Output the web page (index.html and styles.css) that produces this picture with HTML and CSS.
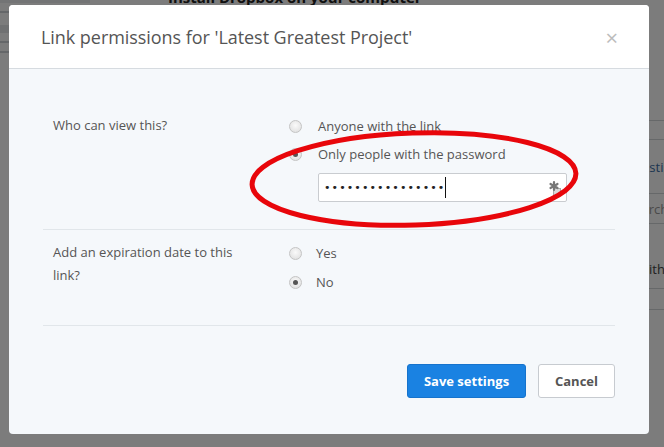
FILE: index.html
```html
<!DOCTYPE html>
<html>
<head>
<meta charset="utf-8">
<link rel="stylesheet" href="styles.css">
</head>
<body>
<div class="page">
  <div class="page-side">
    <div class="side-line light"></div>
    <div class="side-line"></div>
    <div class="side-band"></div>
    <div class="side-line"></div>
    <div class="side-line"></div>
  </div>
  <div class="page-main">
    <h2 class="page-title">Install Dropbox on your computer</h2>
    <div class="page-list">
      <div class="list-row r1"></div>
      <div class="list-row r2 link">Existing</div>
      <div class="list-row r3 muted">Search</div>
      <div class="list-row r4">With</div>
      <div class="list-row r5"></div>
    </div>
  </div>
</div>
<div class="backdrop"></div>

<div class="modal">
  <div class="modal-header">
    <h1 class="modal-title">Link permissions for 'Latest Greatest Project'</h1>
    <span class="modal-close">×</span>
  </div>
  <div class="modal-body">
    <div class="row row-first">
      <div class="row-label">Who can view this?</div>
      <div class="row-options">
        <div class="opt"><span class="radio"></span><span>Anyone with the link</span></div>
        <div class="opt"><span class="radio checked"></span><span>Only people with the password</span></div>
        <div class="pw">
          <span class="pw-dots">••••••••••••••••</span><span class="caret"></span>
          <svg class="pw-icon" width="14" height="18" viewBox="0 0 14 18">
            <rect x="5.5" y="9.5" width="7" height="7" fill="#d9d9d9" stroke="#aaa"/>
            <g stroke="#777" stroke-width="2.2" stroke-linecap="round">
              <line x1="6" y1="3" x2="6" y2="11"/>
              <line x1="2.5" y1="5" x2="9.5" y2="9"/>
              <line x1="2.5" y1="9" x2="9.5" y2="5"/>
            </g>
          </svg>
        </div>
      </div>
    </div>
    <div class="row row-second">
      <div class="row-label">Add an expiration date to this link?</div>
      <div class="row-options">
        <div class="opt"><span class="radio"></span><span>Yes</span></div>
        <div class="opt"><span class="radio checked"></span><span>No</span></div>
      </div>
    </div>
    <div class="modal-footer">
      <button class="btn btn-primary">Save settings</button>
      <button class="btn btn-default">Cancel</button>
    </div>
  </div>
</div>

<svg class="annotation" width="664" height="447" viewBox="0 0 664 447">
  <ellipse cx="414" cy="179" rx="162" ry="46" transform="rotate(-2 414 179)" fill="none" stroke="#e8060b" stroke-width="5"/>
</svg>
</body>
</html>
```

FILE: styles.css
```css
html, body {
  margin: 0;
  padding: 0;
  width: 664px;
  height: 447px;
  overflow: hidden;
  font-family: "Open Sans", "DejaVu Sans", sans-serif;
}

.page {
  display: flex;
  width: 664px;
  height: 447px;
  background: #ffffff;
  overflow: hidden;
}

.page-side {
  flex: none;
  width: 90px;
  display: flex;
  flex-direction: column;
  gap: 8px;
}

.side-band {
  height: 8px;
  margin-top: 4px;
  background: #e6e8eb;
}

.side-line {
  height: 2px;
  background: #d0d3d8;
}

.side-line.light {
  height: 3px;
  background: #eceef0;
}

.page-main {
  flex: 1;
  min-width: 0;
}

.page-title {
  margin: -12px 0 0 78px;
  font-size: 15px;
  line-height: 18px;
  font-weight: 700;
  color: #222;
  white-space: nowrap;
}

.page-list {
  margin: 114px 0 0 470px;
  display: flex;
  flex-direction: column;
}

.list-row {
  border-top: 1px solid #d2d5d9;
  font-size: 13px;
  color: #444;
  padding-left: 72px;
  box-sizing: border-box;
  display: flex;
  align-items: center;
  white-space: nowrap;
}

.list-row.r1 { height: 19px; }
.list-row.r2 { height: 54px; }
.list-row.r3 { height: 30px; padding-left: 67px; }
.list-row.r4 { height: 65px; align-items: flex-start; padding-top: 36px; padding-left: 77px; }
.list-row.r5 { height: 22px; border-bottom: 1px solid #d2d5d9; }
.list-row.link { color: #3a6ea5; }
.list-row.muted { color: #999; }

.backdrop {
  position: absolute;
  inset: 0;
  background: rgba(0, 0, 0, 0.515);
}

.modal {
  position: absolute;
  left: 9px;
  top: 5px;
  width: 640px;
  height: 429px;
  background: #f5f8fb;
  border-radius: 4px;
  overflow: hidden;
  display: flex;
  flex-direction: column;
}

.modal-header {
  height: 63px;
  background: #ffffff;
  border-bottom: 1px solid #d6dbe0;
  display: flex;
  align-items: center;
  justify-content: space-between;
  padding: 0 31px 0 32px;
}

.modal-title {
  margin: 0;
  font-size: 18px;
  font-weight: 400;
  color: #555;
  letter-spacing: -0.05px;
}

.modal-close {
  font-size: 22px;
  color: #bcbcbc;
  line-height: 1;
}

.modal-body {
  flex: 1;
  padding: 0 34px;
  display: flex;
  flex-direction: column;
}

.row {
  display: flex;
  border-bottom: 1px solid #e1e6ea;
  font-size: 13px;
  color: #555;
}

.row-first {
  padding: 46px 0 27px;
}

.row-second {
  padding: 12px 0 32px;
}

.row-label {
  width: 229px;
  box-sizing: border-box;
  padding-left: 10px;
  padding-right: 22px;
  line-height: 23px;
  margin-top: -1px;
}

.row-first .row-label {
  line-height: 22px;
}

.row-options {
  flex: 1;
  padding-left: 17px;
  display: flex;
  flex-direction: column;
  gap: 6px;
}

.row-second .row-options {
  gap: 7px;
}

.opt {
  display: flex;
  align-items: center;
  gap: 16px;
  height: 22px;
}

.row-second .opt {
  gap: 14px;
}

.radio {
  width: 11px;
  height: 11px;
  border-radius: 50%;
  border: 1px solid #c4c4c4;
  background: radial-gradient(circle at 50% 40%, #fafafa, #dcdcdc);
  display: flex;
  align-items: center;
  justify-content: center;
  flex: none;
}

.radio.checked::after {
  content: "";
  width: 5px;
  height: 5px;
  border-radius: 50%;
  background: #555;
}

.pw {
  margin-top: 2px;
  margin-left: 29px;
  width: 249px;
  height: 29px;
  box-sizing: border-box;
  border: 1px solid #c9ccd0;
  border-radius: 2px;
  background: #ffffff;
  display: flex;
  align-items: center;
  padding-left: 5px;
  padding-right: 4px;
}

.pw-dots {
  font-family: "DejaVu Sans", sans-serif;
  font-size: 11px;
  letter-spacing: 1.1px;
  color: #222;
}

.caret {
  width: 1px;
  height: 21px;
  background: #111;
}

.pw-icon {
  margin-left: auto;
}

.modal-footer {
  display: flex;
  justify-content: flex-end;
  gap: 12px;
  padding-top: 38px;
}

.btn {
  height: 34px;
  border-radius: 3px;
  font-family: "Open Sans", sans-serif;
  font-size: 13px;
  font-weight: 700;
  padding: 0;
  white-space: nowrap;
  cursor: pointer;
}

.btn-primary {
  width: 119px;
  background: #1a82e2;
  border: 1px solid #1673cc;
  color: #ffffff;
}

.btn-default {
  width: 77px;
  background: #ffffff;
  border: 1px solid #c7cbd0;
  color: #555;
}

.annotation {
  position: absolute;
  left: 0;
  top: 0;
  pointer-events: none;
}
```
